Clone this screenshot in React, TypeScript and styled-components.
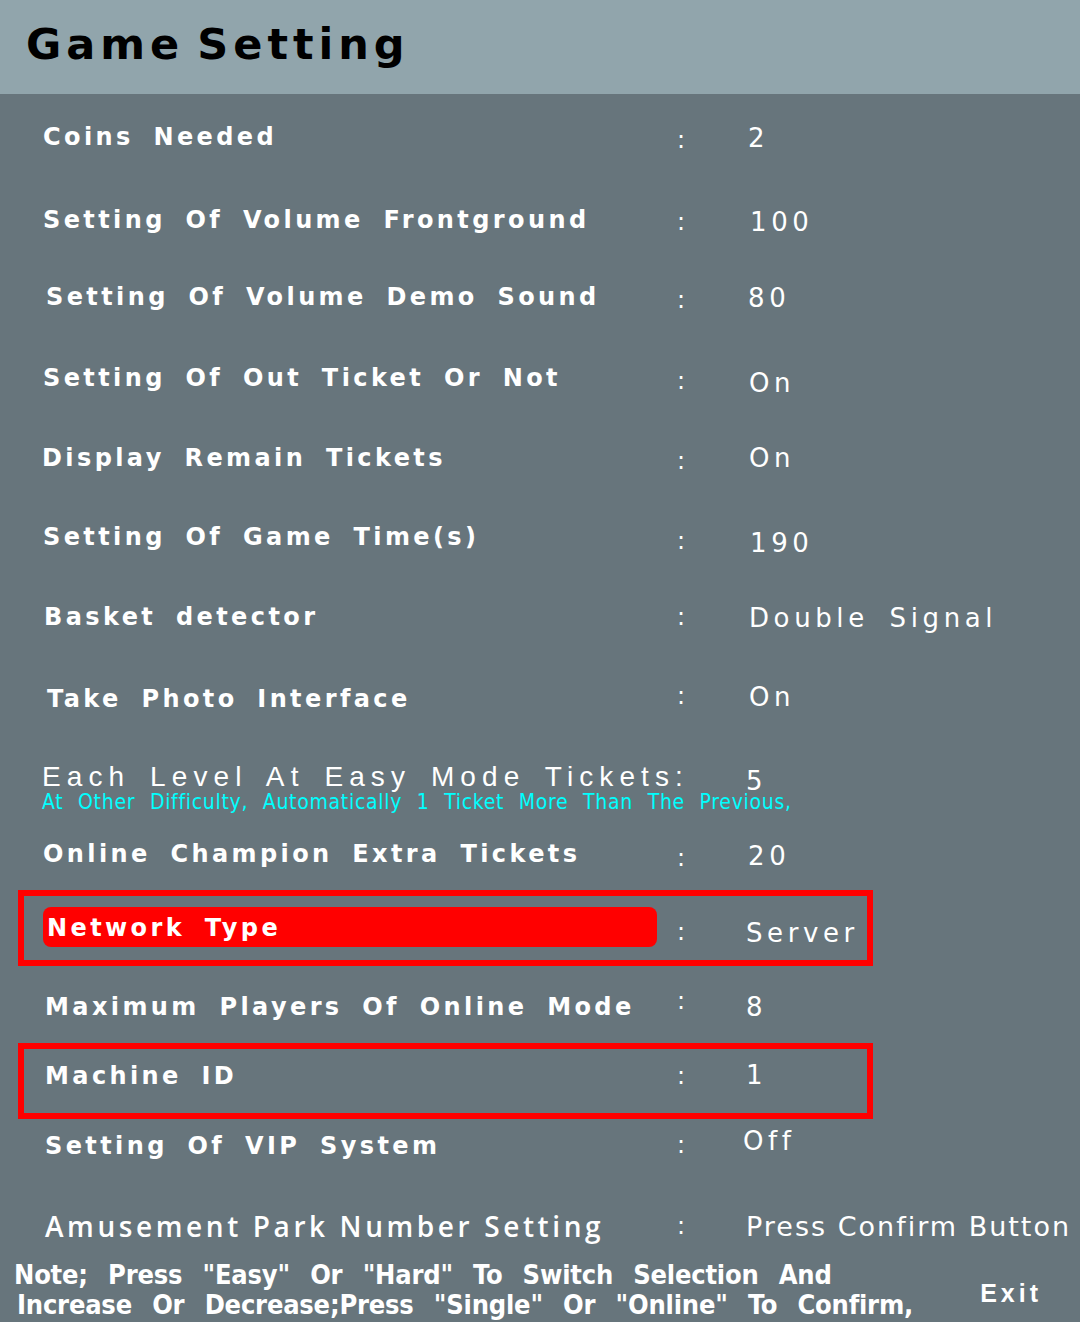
import React from "react";
import styled, { createGlobalStyle } from "styled-components";

const Global = createGlobalStyle`
  html, body { margin: 0; padding: 0; background: #67757c; }
  body { font-family: "DejaVu Sans", "Liberation Sans", sans-serif; }
`;

const Screen = styled.div`
  width: 1080px;
  height: 1322px;
  background: #67757c;
  display: flex;
  flex-direction: column;
  overflow: hidden;
  color: #ffffff;
`;

const Header = styled.div`
  height: 94px;
  flex: none;
  background: #91a5ac;
  display: flex;
  align-items: center;
  padding-left: 26px;
  box-sizing: border-box;
`;

const Title = styled.h1`
  margin: 0;
  margin-top: -6px;
  font-family: "DejaVu Sans", sans-serif;
  font-weight: 700;
  font-size: 43px;
  letter-spacing: 5px;
  word-spacing: -7px;
  color: #000;
`;

const List = styled.div`
  display: flex;
  flex-direction: column;
  flex: none;
`;

const Row = styled.div<{ $h: number; $pad: number; $box?: boolean }>`
  display: grid;
  grid-template-columns: ${(p) => (p.$box ? 653 : 677)}px 69px 1fr;
  align-items: start;
  height: ${(p) => p.$h}px;
  padding-top: ${(p) => p.$pad}px;
  box-sizing: border-box;
  ${(p) =>
    p.$box
      ? `
    margin-left: 18px;
    width: 855px;
    border: 6px solid #ff0000;
  `
      : ""}
`;

const Label = styled.div<{ $lx: number; $alt?: boolean }>`
  padding-left: ${(p) => p.$lx}px;
  line-height: 30px;
  white-space: nowrap;
  font-family: ${(p) => (p.$alt ? `"Open Sans", sans-serif` : `"DejaVu Sans", sans-serif`)};
  font-weight: ${(p) => (p.$alt ? 600 : 700)};
  font-size: ${(p) => (p.$alt ? 28 : 24)}px;
  letter-spacing: ${(p) => (p.$alt ? 3.6 : 3.4)}px;
  word-spacing: ${(p) => (p.$alt ? 0 : 8)}px;
`;

const Pill = styled.div`
  width: 614px;
  height: 40px;
  margin-left: 19px;
  background: #ff0000;
  border-radius: 8px;
  padding-left: 4px;
  box-sizing: border-box;
  line-height: 42px;
  white-space: nowrap;
  font-family: "DejaVu Sans", sans-serif;
  font-weight: 700;
  font-size: 24px;
  letter-spacing: 3.4px;
  word-spacing: 8px;
`;

const Colon = styled.div<{ $dy: number }>`
  margin-top: ${(p) => p.$dy}px;
  line-height: 30px;
  font-family: "DejaVu Sans", sans-serif;
  font-size: 24px;
`;

const Value = styled.div<{ $dx: number; $dy: number; $tight?: boolean; $lh?: number }>`
  margin-left: ${(p) => p.$dx}px;
  margin-top: ${(p) => p.$dy}px;
  line-height: ${(p) => p.$lh ?? 30}px;
  white-space: nowrap;
  font-family: "DejaVu Sans", sans-serif;
  font-size: ${(p) => (p.$tight ? 27 : 26)}px;
  letter-spacing: ${(p) => (p.$tight ? 2 : 4.6)}px;
  word-spacing: ${(p) => (p.$tight ? 0 : 8)}px;
`;

const TicketBlock = styled.div`
  padding-left: 42px;
  white-space: nowrap;
`;

const TicketLine = styled.div`
  line-height: 30px;
  font-family: "Liberation Sans", sans-serif;
  font-size: 28px;
  letter-spacing: 6.1px;
  word-spacing: 6px;
`;

const HintLine = styled.div`
  line-height: 20px;
  color: #00ffff;
  font-family: "Liberation Sans Narrow", "DejaVu Sans Condensed", sans-serif;
  font-stretch: condensed;
  font-size: 21px;
  letter-spacing: 0.7px;
  word-spacing: 8px;
`;

const Footer = styled.div`
  flex: 1;
  display: flex;
  align-items: flex-start;
  justify-content: space-between;
  padding: 8px 38px 0 14px;
`;

const Note = styled.div`
  line-height: 30px;
  white-space: nowrap;
  font-family: "Liberation Sans Narrow", "DejaVu Sans Condensed", sans-serif;
  font-stretch: condensed;
  font-weight: 700;
  font-size: 27px;
  letter-spacing: -0.2px;
  word-spacing: 12px;
`;

const NoteLine = styled.div<{ $lx: number }>`
  padding-left: ${(p) => p.$lx}px;
`;

const Exit = styled.div`
  margin-top: 18px;
  line-height: 30px;
  font-family: "Liberation Sans", sans-serif;
  font-weight: 700;
  font-size: 25px;
  letter-spacing: 4px;
`;

type Item = {
  label: string;
  value: string;
  h: number;
  pad: number;
  lx: number;
  vx: number;
  vdy: number;
  cdy: number;
  alt?: boolean;
  tight?: boolean;
};

const items: Item[] = [
  { label: "Coins Needed", value: "2", h: 83, pad: 28, lx: 43, vx: 748, vdy: 1, cdy: 3 },
  { label: "Setting Of Volume Frontground", value: "100", h: 77, pad: 28, lx: 43, vx: 750, vdy: 2, cdy: 2 },
  { label: "Setting Of Volume Demo Sound", value: "80", h: 81, pad: 28, lx: 46, vx: 748, vdy: 1, cdy: 3 },
  { label: "Setting Of Out Ticket Or Not", value: "On", h: 80, pad: 28, lx: 43, vx: 749, vdy: 5, cdy: 3 },
  { label: "Display Remain Tickets", value: "On", h: 79, pad: 28, lx: 42, vx: 749, vdy: 0, cdy: 3 },
  { label: "Setting Of Game Time(s)", value: "190", h: 80, pad: 28, lx: 43, vx: 750, vdy: 6, cdy: 4 },
  { label: "Basket detector", value: "Double Signal", h: 82, pad: 28, lx: 44, vx: 749, vdy: 1, cdy: 0 },
  { label: "Take Photo Interface", value: "On", h: 78, pad: 28, lx: 47, vx: 749, vdy: -2, cdy: -3 },
];

const items2: Item[] = [
  { label: "Maximum Players Of Online Mode", value: "8", h: 77, pad: 26, lx: 45, vx: 746, vdy: 0, cdy: -6 },
];

const items3: Item[] = [
  { label: "Setting Of VIP System", value: "Off", h: 71, pad: 12, lx: 45, vx: 743, vdy: -5, cdy: -1 },
  { label: "Amusement Park Number Setting", value: "Press Confirm Button", h: 62, pad: 21, lx: 45, vx: 746, vdy: 1, cdy: 0, alt: true, tight: true },
];

const VALUE_X = 746;

function SettingRow({ it }: { it: Item }) {
  return (
    <Row $h={it.h} $pad={it.pad}>
      <Label $lx={it.lx} $alt={it.alt}>{it.label}</Label>
      <Colon $dy={it.cdy}>:</Colon>
      <Value $dx={it.vx - VALUE_X} $dy={it.vdy} $tight={it.tight}>{it.value}</Value>
    </Row>
  );
}

export default function App() {
  return (
    <>
      <Global />
      <Screen>
        <Header>
          <Title>Game Setting</Title>
        </Header>
        <List>
          {items.map((it) => (
            <SettingRow key={it.label} it={it} />
          ))}
          <Row $h={77} $pad={28}>
            <TicketBlock>
              <TicketLine>Each Level At Easy Mode Tickets:</TicketLine>
              <HintLine>At Other Difficulty, Automatically 1 Ticket More Than The Previous,</HintLine>
            </TicketBlock>
            <span />
            <Value $dx={0} $dy={8} $lh={22}>5</Value>
          </Row>
          <SettingRow
            it={{ label: "Online Champion Extra Tickets", value: "20", h: 79, pad: 28, lx: 43, vx: 748, vdy: 2, cdy: 4 }}
          />
          <Row $h={76} $pad={11} $box>
            <Pill>Network Type</Pill>
            <Colon $dy={10}>:</Colon>
            <Value $dx={0} $dy={11}>Server</Value>
          </Row>
          {items2.map((it) => (
            <SettingRow key={it.label} it={it} />
          ))}
          <Row $h={76} $pad={12} $box>
            <Label $lx={45 - 24}>Machine ID</Label>
            <Colon $dy={0}>:</Colon>
            <Value $dx={0} $dy={-1}>1</Value>
          </Row>
          {items3.map((it) => (
            <SettingRow key={it.label} it={it} />
          ))}
        </List>
        <Footer>
          <Note>
            <NoteLine $lx={0}>Note; Press "Easy" Or "Hard" To Switch Selection And</NoteLine>
            <NoteLine $lx={3}>Increase Or Decrease;Press "Single" Or "Online" To Confirm,</NoteLine>
          </Note>
          <Exit>Exit</Exit>
        </Footer>
      </Screen>
    </>
  );
}
